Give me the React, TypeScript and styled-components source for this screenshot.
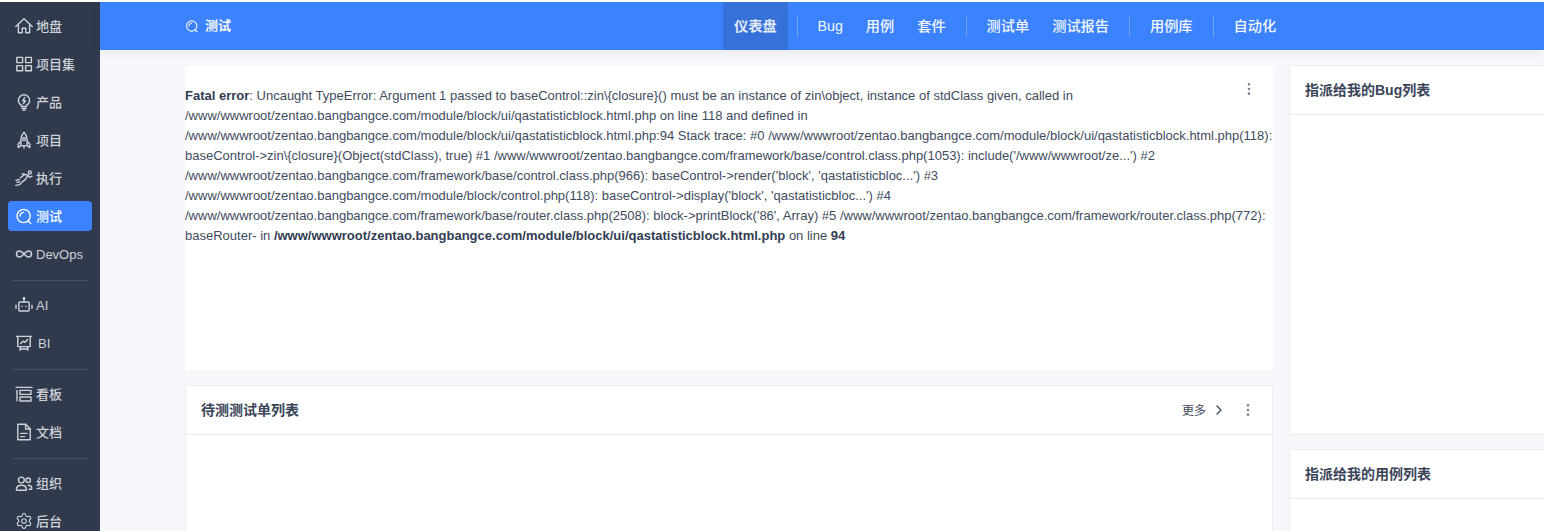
import React from "react";
import styled, { createGlobalStyle } from "styled-components";
import { Infinity as InfinityIcon, Settings, ChevronRight, EllipsisVertical } from "lucide-react";

const Global = createGlobalStyle`
  html, body { margin: 0; padding: 0; height: 531px; overflow: hidden; background: #fff; }
  body { font-family: "Liberation Sans", "Noto Sans CJK SC", sans-serif; font-size: 13px; color: #313c52; }
  #root { height: 531px; }
`;
const Shell = styled.div`display: flex; height: 529px; margin-top: 2px; width: 1544px; overflow: hidden;`;
const Sidebar = styled.aside`flex: 0 0 100px; display: flex; flex-direction: column; background: #303a4c; padding: 9px 8px 0; box-sizing: border-box; overflow: hidden;`;
const NavItem = styled.div<{ $active?: boolean }>`
  flex: none; display: flex; align-items: center; gap: 3px; height: 30px; margin-bottom: 8px; padding-left: 7px; border-radius: 4px;
  color: ${p => (p.$active ? "#fff" : "#ced2d9")}; background: ${p => (p.$active ? "#3b82ff" : "transparent")};
  font-size: 13px; font-weight: 500; white-space: nowrap;
  svg { flex: none; width: 18px; height: 18px; }
`;
const NavLabel = styled.span<{ $latin?: boolean; $indent?: number }>`
  margin-bottom: ${p => (p.$latin ? "0" : "2px")};
  margin-left: ${p => p.$indent ?? 0}px;
`;
const SideRule = styled.div`flex: none; height: 1px; background: #465062; margin: 3px 4px 9px;`;
const Column = styled.div`flex: 1; min-width: 0; display: flex; flex-direction: column;`;
const Header = styled.header`flex: 0 0 48px; background: #3b82ff; display: flex; align-items: stretch; color: #f4f7fd; box-shadow: 0 3px 10px rgba(40,60,90,.07); position: relative;`;
const Crumb = styled.div`flex: 0 0 623px; box-sizing: border-box; padding-left: 85px; display: flex; align-items: center; gap: 6px; font-size: 13px; font-weight: 600; svg { width: 14px; height: 14px; }`;
const CrumbLabel = styled.span`margin-bottom: 3px;`;
const TopNav = styled.nav`display: flex; align-items: stretch; gap: 1px; font-size: 14.2px; font-weight: 500;`;
const TopItem = styled.div<{ $active?: boolean; $latin?: boolean }>`
  display: flex; align-items: center; padding: 0 11px ${p => (p.$latin ? "1px" : "3px")}; background: ${p => (p.$active ? "#3671da" : "transparent")};
  color: ${p => (p.$active ? "#e2e9f6" : "#f4f7fd")}; font-weight: ${p => (p.$active ? 700 : 500)};
`;
const TopRule = styled.span`align-self: center; width: 1px; height: 22px; background: rgba(255,255,255,.25); margin: 0 8px;`;
const Body = styled.main`flex: 1; min-height: 0; background: #f7f8fb; padding: 15px 0 0 85px; display: flex; gap: 16px; overflow: hidden;`;
const MainCol = styled.div`flex: 0 0 1088px; min-width: 0; display: flex; flex-direction: column;`;
const SideCol = styled.div`flex: 0 0 340px; display: flex; flex-direction: column; gap: 14px;`;
const ErrorCard = styled.section`position: relative; flex: 0 0 304px; box-sizing: border-box; margin: 1px 0 15px; background: #fff; border-radius: 2px; padding: 20px 0 0; font-size: 13px; line-height: 20px; color: #414b5e; white-space: nowrap;`;
const ErrorStrong = styled.b`font-weight: 700; color: #313c52;`;
const CornerMenu = styled.span`position: absolute; right: 16px; top: 15px; color: #7d8594; display: flex; svg { width: 16px; height: 16px; }`;
const Card = styled.section`flex: 0 0 370px; box-sizing: border-box; background: #fff; border: 1px solid #e9ebef; border-radius: 2px;`;
const CardHead = styled.div`height: 49px; border-bottom: 1px solid #e9ebef; display: flex; align-items: center; padding: 0 16px 1px 15px; box-sizing: border-box;`;
const CardTitle = styled.span`font-size: 14px; font-weight: 600; color: #3a4458; margin-bottom: 2px;`;
const Spacer = styled.span`flex: 1;`;
const More = styled.span`display: flex; align-items: center; gap: 5px; font-size: 12px; font-weight: 400; margin-right: 13px; color: #414b5e; svg { width: 16px; height: 16px; }`;
const Dots = styled.span`display: flex; color: #7d8594; svg { width: 16px; height: 16px; }`;

const S = { fill: "none", stroke: "currentColor", strokeWidth: 1.4, strokeLinecap: "round" as const, strokeLinejoin: "round" as const, viewBox: "0 0 18 18" };
const Home = () => <svg {...S}><path d="M.8 9.4 9 1.8l8.2 7.6" /><path d="M3.4 7.6v8.2h3.8v-4.6h3.6v4.6h3.8V7.6" /></svg>;
const Grid = () => <svg {...S}><rect x="1.8" y="2.4" width="5.8" height="5.2" /><rect x="10.6" y="2.4" width="5.8" height="5.2" /><rect x="1.8" y="10.6" width="5.8" height="5.2" /><rect x="10.6" y="10.6" width="5.8" height="5.2" /></svg>;
const Bulb = () => <svg {...S}><path d="M6.4 12.2C4.6 11.2 3.4 9.4 3.4 7.4a5.6 5.6 0 0 1 11.2 0c0 2-1.2 3.8-3 4.8v1.2H6.4Z" /><path d="M9.6 4.6 7.8 7.8h2.6L8.4 10.6" /><path d="M6.8 15.2h4.4M7.8 17h2.4" /></svg>;
const Rocket = () => <svg {...S}><path d="M9 1.2C6.6 3.6 5.8 7 5.8 10.4v4.2h6.4v-4.2C12.2 7 11.4 3.6 9 1.2Z" /><path d="M5.8 10.2 3.2 13v3.6l2.6-2" /><path d="M12.2 10.2 14.8 13v3.6l-2.6-2" /><circle cx="9" cy="8.2" r="1.4" /><path d="M9 14.6v2.4" /></svg>;
const Runner = () => <svg {...S}><path d="M.8 16.4 4.8 15.6 7.4 12.6" /><path d="M1 11.4 4.4 10.4M2 13.4 4.6 12.8" /><path d="M5.4 8.8 9.8 5.4 13 6.2 10.6 10.2 8 12.4" /><path d="M9.8 5.4 7.2 4.8" /><path d="M13 6.4 14.6 8.4 17 7.2" /><circle cx="14.8" cy="3.4" r="1.5" /></svg>;
const Test = () => <svg {...S}><circle cx="8.6" cy="9" r="6.6" /><path d="M12.8 13.8 15.8 16.6" /><path d="M5 9a3.6 3.6 0 0 1 3.6-3.6" /></svg>;
const Board = () => <svg {...S}><path d="M1 2.4h16" /><path d="M2 5.4v10.4" /><rect x="5" y="5.4" width="11" height="4" /><rect x="5" y="12" width="11" height="4" /></svg>;
const Chart = () => <svg {...S}><path d="M1.6 2.4h14.8" /><path d="M2.8 2.4v10.2h12.4V2.4" /><path d="M5.6 9.4 8 7.2l1.8 1.2 2.8-3" /><path d="M5.6 12.6 5 16.2M12.4 12.6l.6 3.6M5 15h8" /></svg>;
const Bot = () => <svg {...S}><rect x="3.8" y="6" width="10.4" height="9" rx="1.2" /><path d="M9 3v3" /><circle cx="9" cy="2.4" r=".7" /><path d="M1 9.2v3M17 9.2v3" /><path d="M7 10.2v.4M11 10.2v.4" /></svg>;
const Doc = () => <svg {...S}><path d="M2.8 1.2h8l4.4 4.6v11H2.8Z" /><path d="M10.6 1.4v4.6h4.4" /><path d="M5.6 10.4h6.4M5.6 13.6h4" /></svg>;
const Users = () => <svg {...S}><circle cx="6.4" cy="6" r="2.9" /><path d="M1.4 15.4c0-2.8 2.2-4.2 5-4.2s5 1.4 5 4.2c0 .6-.4.8-1 .8H2.4c-.6 0-1-.2-1-.8Z" /><circle cx="13.2" cy="6.2" r="2.2" /><path d="M13 11.2c2.2 0 3.8 1 3.8 3.2 0 .6-.3.8-.8.8h-2" /></svg>;

const nav: [string, React.ReactNode][] = [
  ["地盘", <Home />], ["项目集", <Grid />], ["产品", <Bulb />], ["项目", <Rocket />], ["执行", <Runner />],
];

export default function App() {
  return (
    <>
      <Global />
      <Shell>
        <Sidebar>
          {nav.map(([t, i]) => <NavItem key={t}>{i}<NavLabel>{t}</NavLabel></NavItem>)}
          <NavItem $active><Test /><NavLabel>测试</NavLabel></NavItem>
          <NavItem><InfinityIcon /><NavLabel $latin>DevOps</NavLabel></NavItem>
          <SideRule />
          <NavItem><Bot /><NavLabel $latin>AI</NavLabel></NavItem>
          <NavItem><Chart /><NavLabel $latin $indent={2}>BI</NavLabel></NavItem>
          <SideRule />
          <NavItem><Board /><NavLabel>看板</NavLabel></NavItem>
          <NavItem><Doc /><NavLabel>文档</NavLabel></NavItem>
          <SideRule />
          <NavItem><Users /><NavLabel>组织</NavLabel></NavItem>
          <NavItem><Settings strokeWidth={1.5} /><NavLabel>后台</NavLabel></NavItem>
        </Sidebar>
        <Column>
          <Header>
            <Crumb><Test /><CrumbLabel>测试</CrumbLabel></Crumb>
            <TopNav>
              <TopItem $active>仪表盘</TopItem>
              <TopRule />
              <TopItem $latin>Bug</TopItem>
              <TopItem>用例</TopItem>
              <TopItem>套件</TopItem>
              <TopRule />
              <TopItem>测试单</TopItem>
              <TopItem>测试报告</TopItem>
              <TopRule />
              <TopItem>用例库</TopItem>
              <TopRule />
              <TopItem>自动化</TopItem>
            </TopNav>
          </Header>
          <Body>
            <MainCol>
              <ErrorCard>
                <CornerMenu><EllipsisVertical /></CornerMenu>
                <ErrorStrong>Fatal error</ErrorStrong>: Uncaught TypeError: Argument 1 passed to baseControl::zin\{"{"}closure{"}"}() must be an instance of zin\object, instance of stdClass given, called in<br />
                /www/wwwroot/zentao.bangbangce.com/module/block/ui/qastatisticblock.html.php on line 118 and defined in<br />
                /www/wwwroot/zentao.bangbangce.com/module/block/ui/qastatisticblock.html.php:94 Stack trace: #0 /www/wwwroot/zentao.bangbangce.com/module/block/ui/qastatisticblock.html.php(118):<br />
                baseControl-&gt;zin\{"{"}closure{"}"}(Object(stdClass), true) #1 /www/wwwroot/zentao.bangbangce.com/framework/base/control.class.php(1053): include('/www/wwwroot/ze...') #2<br />
                /www/wwwroot/zentao.bangbangce.com/framework/base/control.class.php(966): baseControl-&gt;render('block', 'qastatisticbloc...') #3<br />
                /www/wwwroot/zentao.bangbangce.com/module/block/control.php(118): baseControl-&gt;display('block', 'qastatisticbloc...') #4<br />
                /www/wwwroot/zentao.bangbangce.com/framework/base/router.class.php(2508): block-&gt;printBlock('86', Array) #5 /www/wwwroot/zentao.bangbangce.com/framework/router.class.php(772):<br />
                baseRouter- in <ErrorStrong>/www/wwwroot/zentao.bangbangce.com/module/block/ui/qastatisticblock.html.php</ErrorStrong> on line <ErrorStrong>94</ErrorStrong>
              </ErrorCard>
              <Card>
                <CardHead>
                  <CardTitle>待测测试单列表</CardTitle>
                  <Spacer />
                  <More>更多<ChevronRight /></More>
                  <Dots><EllipsisVertical /></Dots>
                </CardHead>
              </Card>
            </MainCol>
            <SideCol>
              <Card><CardHead><CardTitle>指派给我的Bug列表</CardTitle></CardHead></Card>
              <Card><CardHead><CardTitle>指派给我的用例列表</CardTitle></CardHead></Card>
            </SideCol>
          </Body>
        </Column>
      </Shell>
    </>
  );
}
